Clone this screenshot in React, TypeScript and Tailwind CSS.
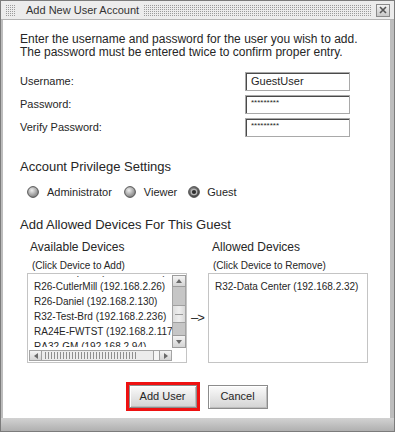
import React from "react";

const dotCls =
  "bg-[conic-gradient(#9a9a9a_25%,transparent_0)] bg-[length:2px_2px]";

function Radio({ checked, id }: { checked?: boolean; id: string }) {
  return (
    <svg width="12" height="12" viewBox="0 0 12 12" className="shrink-0">
      <defs>
        <radialGradient id={id} cx="40%" cy="35%" r="70%">
          <stop offset="0" stopColor={checked ? "#9a9a9a" : "#eeeeee"} />
          <stop offset="1" stopColor={checked ? "#3c3c3c" : "#777777"} />
        </radialGradient>
      </defs>
      <circle cx="6" cy="6" r="5.4" fill={`url(#${id})`} stroke="#4a4a4a" strokeWidth="0.9" />
      {checked && (
        <>
          <circle cx="6" cy="6" r="3.3" fill="#b8b8b8" />
          <circle cx="6" cy="6" r="2.1" fill="#2e2e2e" />
        </>
      )}
    </svg>
  );
}

function Tri({ dir }: { dir: "up" | "down" | "left" | "right" }) {
  const pts =
    dir === "up"
      ? "1,5 4,1 7,5"
      : dir === "down"
      ? "1,1 4,5 7,1"
      : dir === "left"
      ? "5,1 1,4 5,7"
      : "1,1 5,4 1,7";
  const w = dir === "up" || dir === "down" ? 8 : 6;
  const h = dir === "up" || dir === "down" ? 6 : 8;
  return (
    <svg width={w} height={h} viewBox={`0 0 ${w} ${h}`}>
      <polygon points={pts} fill="#6a6a6a" />
    </svg>
  );
}

function Row({ children }: { children: React.ReactNode }) {
  return <div className="h-[15px] leading-[15px] whitespace-nowrap text-[10px]">{children}</div>;
}

export default function App() {
  return (
    <div className="w-[395px] h-[432px] flex flex-col bg-[#bdbdbd] border border-[#7c7c7c] font-['Liberation_Sans',Arial,sans-serif] text-[#262626] overflow-hidden">
      {/* Title bar */}
      <div className="h-[19px] shrink-0 flex items-center bg-[#ececec] border-b border-[#b4b4b4]">
        <div className={`ml-[4px] w-[11px] h-[11px] ${dotCls}`} />
        <div className="ml-[10px] text-[11px] leading-[13px] text-[#333] whitespace-nowrap">Add New User Account</div>
        <div className={`ml-[4px] flex-1 h-[11px] ${dotCls}`} />
        <div className="ml-[4px] mr-[4px] w-[14px] h-[13px] flex items-center justify-center border border-[#8a8a8a] bg-[linear-gradient(#f2f2f2,#c8c8c8)]">
          <svg width="8" height="8" viewBox="0 0 8 8">
            <path d="M1 1 L7 7 M7 1 L1 7" stroke="#555" strokeWidth="1.6" />
          </svg>
        </div>
      </div>

      {/* Body */}
      <div className="ml-[2px] mr-[4px] h-[398px] shrink-0 bg-white flex flex-col">
        <div className="pl-[17px] mt-[13px] text-[12px] leading-[13px]">
          <div>Enter the username and password for the user you wish to add.</div>
          <div>The password must be entered twice to confirm proper entry.</div>
        </div>

        <div className="pl-[17px] mt-[13px] flex flex-col gap-[4px] text-[11px]">
          {[
            ["Username:", "GuestUser"],
            ["Password:", "*********"],
            ["Verify Password:", "*********"],
          ].map(([label, val], i) => (
            <div key={i} className="h-[19px] flex items-center">
              <div className="w-[225px]">{label}</div>
              <div className="w-[105px] h-[19px] border border-[#a9a9a9] shadow-[inset_1px_1px_0_#4a4a4a] flex items-center pl-[5px]">
                {i === 0 ? (
                  <span className="text-[11px]">{val}</span>
                ) : (
                  <span className="text-[8px] leading-[8px] -mt-[3px] tracking-[0px]">{val}</span>
                )}
              </div>
            </div>
          ))}
        </div>

        <div className="pl-[17px] mt-[22px] text-[13px] leading-[15px]">Account Privilege Settings</div>

        <div className="pl-[24px] mt-[11px] h-[14px] flex items-center text-[11px]">
          <Radio id="r1" />
          <span className="ml-[8px]">Administrator</span>
          <span className="ml-[12px]" />
          <Radio id="r2" />
          <span className="ml-[8px]">Viewer</span>
          <span className="ml-[11px]" />
          <Radio id="r3" checked />
          <span className="ml-[7px]">Guest</span>
        </div>

        <div className="pl-[17px] mt-[18px] text-[13px] leading-[15px]">Add Allowed Devices For This Guest</div>

        <div className="pl-[24px] mt-[8px] flex">
          {/* Available */}
          <div className="w-[160px] flex flex-col">
            <div className="pl-[3px] text-[12px] leading-[14px]">Available Devices</div>
            <div className="pl-[5px] mt-[6px] text-[10px] leading-[12px]">(Click Device to Add)</div>
            <div className="mt-[1px] w-[160px] h-[90px] border border-[#c4c4c4] flex flex-col">
              <div className="h-[76px] flex">
                <div className="w-[144px] h-[71px] mt-[2px] overflow-hidden">
                  <div className="-mt-[12px] pl-[6px]">
                    <Row>R26-Campbell (192.168.2.25)</Row>
                    <Row>R26-CutlerMill (192.168.2.26)</Row>
                    <Row>R26-Daniel (192.168.2.130)</Row>
                    <Row>R32-Test-Brd (192.168.2.236)</Row>
                    <Row>RA24E-FWTST (192.168.2.117)</Row>
                    <Row>RA32-GM (192.168.2.94)</Row>
                  </div>
                </div>
                <div className="w-[14px] h-[73px] mt-[1px] flex flex-col">
                  <div className="h-[12px] border border-[#9c9c9c] bg-[linear-gradient(#f4f4f4,#d4d4d4)] flex items-center justify-center">
                    <Tri dir="up" />
                  </div>
                  <div className="flex-1 flex flex-col border-x border-[#a4a4a4] bg-[#c6c6c6]">
                    <div className="h-[18px]" />
                    <div className="h-[18px] border-y border-[#a0a0a0] bg-[linear-gradient(90deg,#dedede,#eeeeee,#d8d8d8)] flex items-center justify-center">
                      <div className="w-[8px] h-px bg-[#9a9a9a]" />
                    </div>
                    <div className="flex-1" />
                  </div>
                  <div className="h-[13px] border border-[#9c9c9c] bg-[linear-gradient(#f4f4f4,#d4d4d4)] flex items-center justify-center">
                    <Tri dir="down" />
                  </div>
                </div>
              </div>
              <div className="h-[12px] flex">
                <div className="ml-[1px] w-[143px] h-[11px] flex border border-[#a4a4a4] bg-[#e4e4e4]">
                  <div className="w-[12px] border-r border-[#a0a0a0] bg-[linear-gradient(#f4f4f4,#d4d4d4)] flex items-center justify-center">
                    <Tri dir="left" />
                  </div>
                  <div className="w-[112px] flex items-center border-r border-[#a0a0a0] bg-[#ececec]">
                    <div className="ml-[3px] w-[92px] h-[7px] bg-[repeating-linear-gradient(90deg,#8e8e8e_0px,#8e8e8e_1px,#ececec_1px,#ececec_3px)]" />
                  </div>
                  <div className="flex-1 bg-[#f6f6f6]" />
                  <div className="w-[12px] border-l border-[#a0a0a0] bg-[linear-gradient(#f4f4f4,#d4d4d4)] flex items-center justify-center">
                    <Tri dir="right" />
                  </div>
                </div>
              </div>
            </div>
          </div>

          {/* arrow */}
          <div className="w-[21px] h-[90px] self-end flex items-center justify-center text-[13px] leading-[13px] tracking-[-1px] pb-[1px]">
            –&gt;
          </div>

          {/* Allowed */}
          <div className="w-[160px] flex flex-col">
            <div className="pl-[4px] text-[12px] leading-[14px]">Allowed Devices</div>
            <div className="pl-[5px] mt-[6px] text-[10px] leading-[12px]">(Click Device to Remove)</div>
            <div className="mt-[1px] w-[160px] h-[90px] border border-[#c4c4c4] pt-[5px] pl-[6px]">
              <Row>R32-Data Center (192.168.2.32)</Row>
            </div>
          </div>
        </div>

        <div className="mt-[19px] flex justify-center items-center gap-[8px] text-[11px]">
          <div className="border-[3px] border-[#ee1111]">
            <div className="w-[68px] h-[23px] border border-[#8c8c8c] bg-[linear-gradient(#fbfbfb,#d3d3d3)] shadow-[inset_1px_1px_0_#ffffff,inset_-1px_-1px_0_#bcbcbc] flex items-center justify-center">
              Add User
            </div>
          </div>
          <div className="w-[60px] h-[24px] border border-[#8c8c8c] bg-[linear-gradient(#fbfbfb,#d3d3d3)] shadow-[inset_1px_1px_0_#ffffff,inset_-1px_-1px_0_#bcbcbc] flex items-center justify-center">
            Cancel
          </div>
        </div>
      </div>

      <div className="flex-1 bg-[linear-gradient(#d2d2d2,#b0b0b0)]" />
    </div>
  );
}
